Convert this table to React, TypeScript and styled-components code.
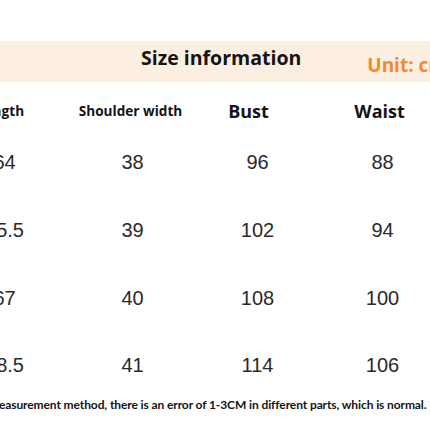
import React from "react";
import styled, { createGlobalStyle } from "styled-components";

const GlobalStyle = createGlobalStyle`
  html, body {
    margin: 0;
    padding: 0;
    background: #ffffff;
  }
`;

const Page = styled.div`
  width: 430px;
  height: 430px;
  overflow: hidden;
  background: #ffffff;
  padding-top: 41px;
  box-sizing: border-box;
`;

const Banner = styled.div`
  display: flex;
  align-items: flex-start;
  height: 41px;
  background: #fcefe1;
  padding-left: 141px;
  white-space: nowrap;
`;

const Title = styled.h2`
  margin: 4px 0 0;
  font-family: "Open Sans", Lato, sans-serif;
  font-weight: 700;
  font-size: 19.5px;
  line-height: 26px;
  color: #141414;
`;

const Unit = styled.span`
  margin: 13px 0 0 66px;
  font-family: "Open Sans", Lato, sans-serif;
  font-weight: 700;
  font-size: 19px;
  line-height: 22px;
  color: #f5892c;
`;

const Table = styled.div`
  display: grid;
  grid-template-columns: 131px 125px 125px 125px;
  grid-template-rows: 46px repeat(3, 68px) 66px;
  margin-left: -61px;
`;

interface HeadProps {
  readonly $big?: boolean;
  readonly $nudge?: number;
}

const Head = styled.div<HeadProps>`
  align-self: end;
  justify-self: center;
  padding-bottom: 8px;
  margin-left: ${(p) => (p.$nudge || 0) * 2}px;
  font-family: "Open Sans", Lato, sans-serif;
  font-weight: 700;
  font-size: ${(p) => (p.$big ? "18px" : "13.6px")};
  line-height: 18px;
  color: #141414;
  white-space: nowrap;
`;

const Cell = styled.div`
  align-self: center;
  justify-self: center;
  font-family: "Liberation Sans", Arial, sans-serif;
  font-weight: 400;
  font-size: 20px;
  line-height: 22px;
  color: #2a2a2a;
`;

const Note = styled.p`
  margin: 0;
  text-indent: -11px;
  white-space: nowrap;
  font-family: Lato, "Open Sans", sans-serif;
  font-weight: 700;
  font-size: 12px;
  letter-spacing: -0.1px;
  line-height: 14px;
  color: #141414;
`;

const rows = [
  ["64", "38", "96", "88"],
  ["65.5", "39", "102", "94"],
  ["67", "40", "108", "100"],
  ["68.5", "41", "114", "106"],
];

export default function App() {
  return (
    <>
      <GlobalStyle />
      <Page>
        <Banner>
          <Title>Size information</Title>
          <Unit>Unit: cm</Unit>
        </Banner>
        <Table>
          <Head $nudge={-4}>Length</Head>
          <Head $nudge={-2}>Shoulder width</Head>
          <Head $big $nudge={-9}>Bust</Head>
          <Head $big $nudge={-3}>Waist</Head>
          {rows.map((r, i) =>
            r.map((v, j) => <Cell key={i + "-" + j}>{v}</Cell>)
          )}
        </Table>
        <Note>
          measurement method, there is an error of 1-3CM in different parts, which is normal. Please understand.
        </Note>
      </Page>
    </>
  );
}
